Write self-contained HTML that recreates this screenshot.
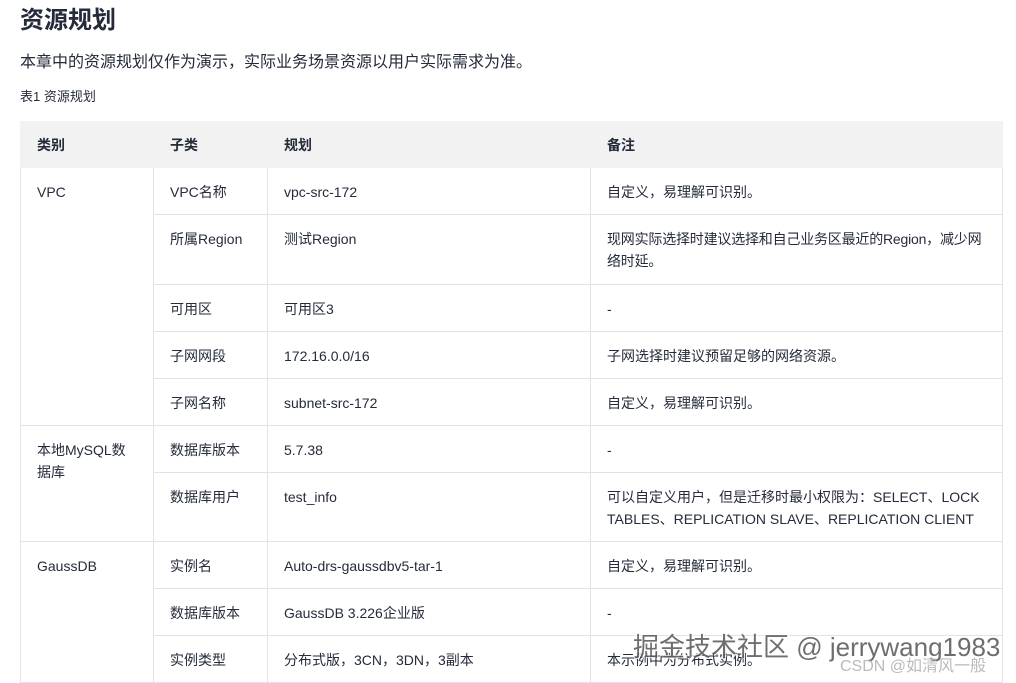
<!DOCTYPE html>
<html><head><meta charset="utf-8"><style>
body{margin:0;background:#fff;font-family:"Liberation Sans","Noto Sans CJK SC",sans-serif;color:#252b3a;width:1016px;height:683px;overflow:hidden;position:relative}
h1{position:absolute;left:20px;top:4px;margin:0;font-size:24px;font-weight:bold;color:#252b3a;line-height:34px}
.p{position:absolute;left:20px;top:51px;font-size:16px;line-height:24px;color:#252b3a}
.cap{position:absolute;left:20px;top:87px;font-size:13px;line-height:20px;color:#252b3a}
table{position:absolute;left:20px;top:121px;border-collapse:collapse;table-layout:fixed;width:982px;font-size:14px}
td,th{border:1px solid #e3e3e3;vertical-align:top;padding:13px 16px 0 16px;line-height:22px;text-align:left;color:#252b3a;white-space:nowrap}
th{background:#f2f2f2;font-weight:bold;height:33px;padding-top:12px;border-color:#f2f2f2}
tr{height:47px}
td{box-sizing:border-box}
.wm{position:absolute;left:633px;top:627px;font-size:26px;color:#555;opacity:.85;white-space:nowrap;text-shadow:1px 1px 0 #fff,-1px -1px 0 #fff}
.wm2{position:absolute;left:840px;top:652px;font-size:16px;color:#bbb;white-space:nowrap}
</style></head><body>
<h1>资源规划</h1>
<div class="p">本章中的资源规划仅作为演示，实际业务场景资源以用户实际需求为准。</div>
<div class="cap">表1 资源规划</div>
<table>
<colgroup><col style="width:133px"><col style="width:114px"><col style="width:323px"><col style="width:412px"></colgroup>
<tr style="height:46px"><th>类别</th><th>子类</th><th>规划</th><th>备注</th></tr>
<tr><td rowspan="5">VPC</td><td>VPC名称</td><td>vpc-src-172</td><td>自定义，易理解可识别。</td></tr>
<tr style="height:70px"><td>所属Region</td><td>测试Region</td><td style="letter-spacing:-0.2px">现网实际选择时建议选择和自己业务区最近的Region，减少网<br>络时延。</td></tr>
<tr><td>可用区</td><td>可用区3</td><td>-</td></tr>
<tr><td>子网网段</td><td>172.16.0.0/16</td><td>子网选择时建议预留足够的网络资源。</td></tr>
<tr><td>子网名称</td><td>subnet-src-172</td><td>自定义，易理解可识别。</td></tr>
<tr><td rowspan="2">本地MySQL数<br>据库</td><td>数据库版本</td><td>5.7.38</td><td>-</td></tr>
<tr style="height:69px"><td>数据库用户</td><td>test_info</td><td>可以自定义用户，但是迁移时最小权限为：SELECT、LOCK<br>TABLES、REPLICATION SLAVE、REPLICATION CLIENT</td></tr>
<tr><td rowspan="3">GaussDB</td><td>实例名</td><td>Auto-drs-gaussdbv5-tar-1</td><td>自定义，易理解可识别。</td></tr>
<tr><td>数据库版本</td><td>GaussDB 3.226企业版</td><td>-</td></tr>
<tr><td>实例类型</td><td>分布式版，3CN，3DN，3副本</td><td>本示例中为分布式实例。</td></tr>
</table>
<div class="wm">掘金技术社区 @ jerrywang1983</div>
<div class="wm2">CSDN @如清风一般</div>
</body></html>
